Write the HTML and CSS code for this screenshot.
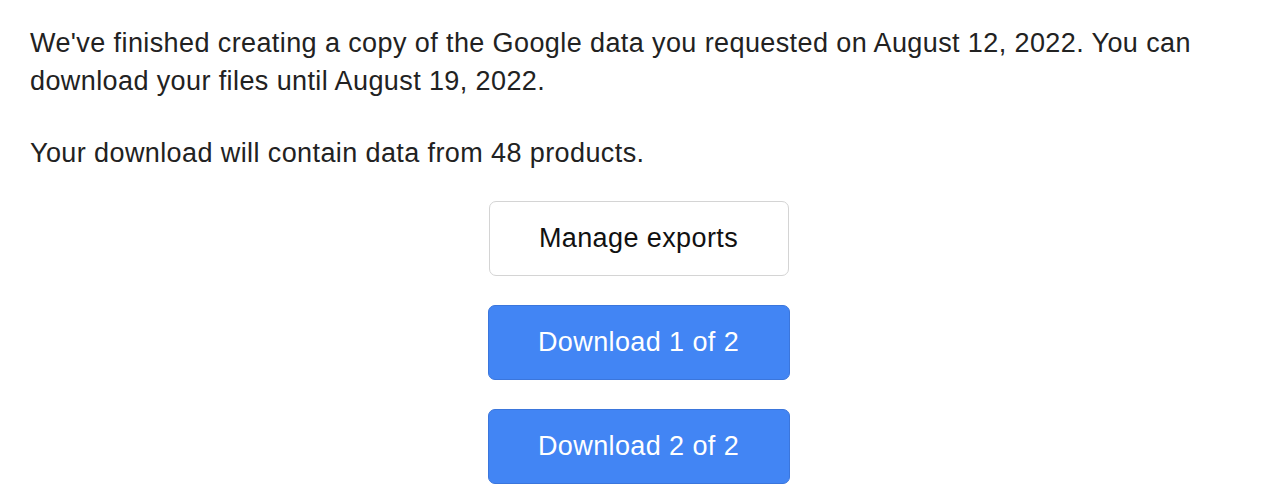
FILE: index.html
```html
<!DOCTYPE html>
<html>
<head>
<meta charset="utf-8">
<link rel="stylesheet" href="styles.css">
</head>
<body>
<div class="content">
  <p class="text">We've finished creating a copy of the Google data you requested on August 12, 2022. You can download your files until August 19, 2022.</p>
  <p class="text second">Your download will contain data from 48 products.</p>
  <div class="actions">
    <a class="btn btn-outline">Manage exports</a>
    <a class="btn btn-primary">Download 1 of 2</a>
    <a class="btn btn-primary">Download 2 of 2</a>
  </div>
</div>
</body>
</html>
```
FILE: styles.css
```css
html, body {
  margin: 0;
  padding: 0;
  background: #ffffff;
}
body {
  font-family: "Liberation Sans", Arial, Helvetica, sans-serif;
  color: #222222;
}
.content {
  width: 1217px;
  margin-left: 30px;
  padding-top: 24px;
}
.text {
  margin: 0;
  font-size: 27px;
  line-height: 38px;
  letter-spacing: 0.4px;
}
.second {
  margin-top: 34px;
}
.actions {
  display: flex;
  flex-direction: column;
  align-items: center;
  gap: 29px;
  margin-top: 29px;
}
.btn {
  display: flex;
  align-items: center;
  justify-content: center;
  box-sizing: border-box;
  height: 75px;
  border-radius: 7px;
  font-size: 27px;
  letter-spacing: 0.4px;
  text-decoration: none;
}
.btn-outline {
  width: 300px;
  border: 1px solid #d4d4d4;
  color: #111111;
  background: #ffffff;
}
.btn-primary {
  width: 302px;
  background: #4285f4;
  border: 1px solid #3b76dc;
  color: #ffffff;
}
```
